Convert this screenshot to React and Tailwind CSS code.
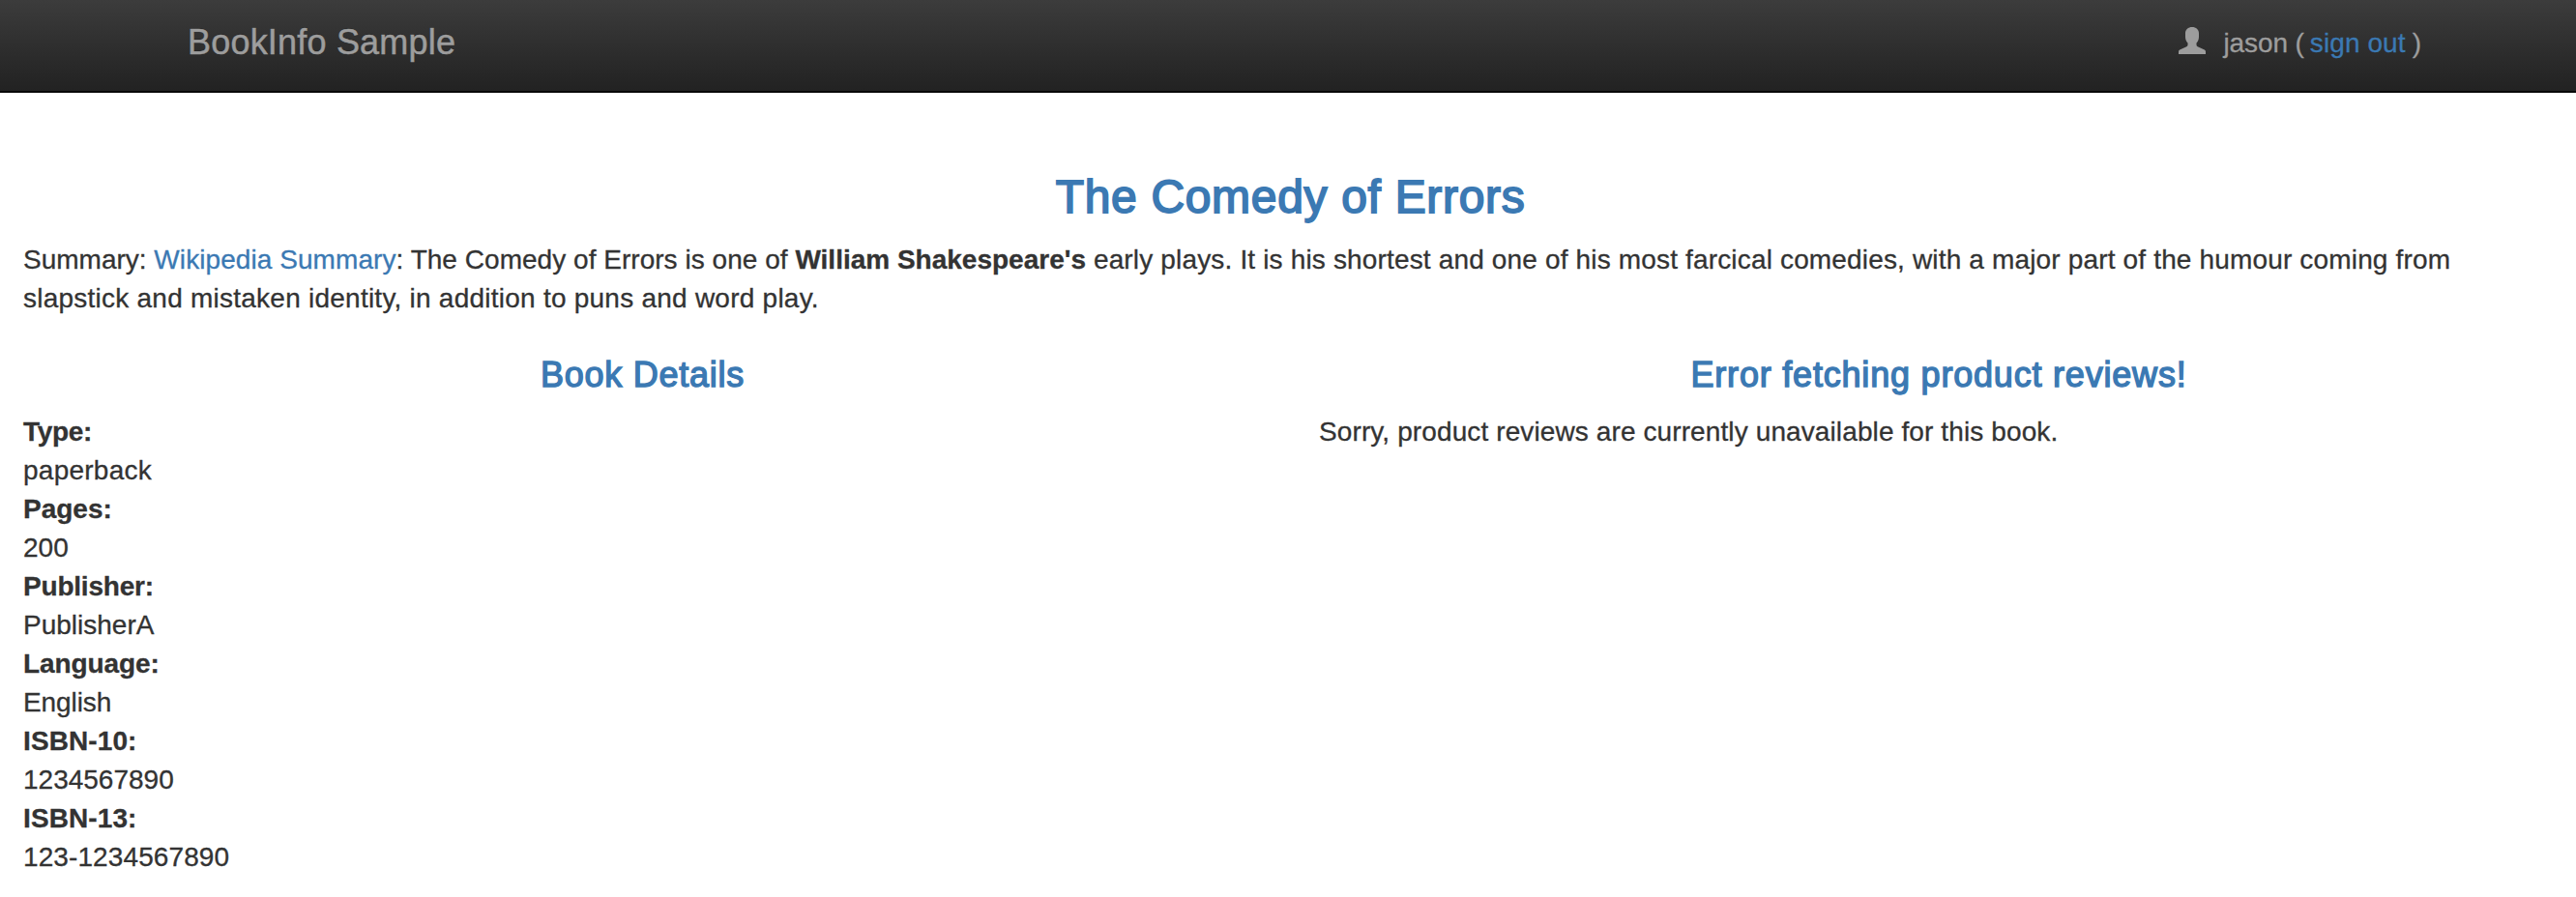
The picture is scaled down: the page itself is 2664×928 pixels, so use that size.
const details = [
  { label: "Type:", value: "paperback", labelClass: "tracking-[-0.3px]", valueClass: "tracking-[0.25px]" },
  { label: "Pages:", value: "200" },
  { label: "Publisher:", value: "PublisherA", labelClass: "tracking-[-0.2px]" },
  { label: "Language:", value: "English", labelClass: "tracking-[-0.1px]", valueClass: "tracking-[-0.1px]" },
  { label: "ISBN-10:", value: "1234567890", labelClass: "tracking-[0.1px]" },
  { label: "ISBN-13:", value: "123-1234567890", labelClass: "tracking-[0.1px]", valueClass: "tracking-[0.1px]" },
];

function UserIcon() {
  return (
    <svg viewBox="0 0 28 28" className="size-7 shrink-0" fill="currentColor" aria-hidden="true">
      <path d="M14 0C10 0 7 2.500 7 6.500V10C7 13 8 14.800 9.500 16.500V18.300C9.500 19.200 9.100 19.800 8.300 20.200L1.200 23.500C.4 23.900 0 24.500 0 25.400V28H28V25.400C28 24.500 27.600 23.900 26.800 23.500L19.700 20.200C18.900 19.800 18.500 19.200 18.500 18.300V16.500C20 14.800 21 13 21 10V6.500C21 2.500 18 0 14 0Z" />
    </svg>
  );
}

function Navbar() {
  return (
    <nav className="flex h-24 items-start justify-between border-b-2 border-[#080808] bg-linear-to-b from-[#3c3c3c] to-[#222222] pl-[194px] pr-40 text-[#9d9d9d]">
      <a className="mt-6 text-[36px] leading-10 tracking-[0.2px] [-webkit-text-stroke:0.5px_currentColor] [text-shadow:0_-1px_0_rgba(0,0,0,0.25)]">
        BookInfo Sample
      </a>
      <div className="mt-[25px] flex whitespace-pre leading-10">
        <span className="mt-[3px] mr-[18px]">
          <UserIcon />
        </span>
        <span className="tracking-[-0.1px]">jason (</span>
        <a className="ml-[6px] tracking-[0.1px] text-[#3b79b3]">sign out</a>
        <span className="ml-[7px]">)</span>
      </div>
    </nav>
  );
}

export default function App() {
  return (
    <div className="min-h-[928px] bg-white font-['Liberation_Sans',Arial,sans-serif] text-[28px] leading-10 text-[#333333] [-webkit-text-stroke:0.3px_currentColor]">
      <Navbar />
      <main className="pt-[81px] pr-[18px] pl-6">
        <h3 className="mb-[19px] pr-px text-center text-[48px] leading-[53px] tracking-[0.68px] text-[#3b79b3] [-webkit-text-stroke:1.8px_currentColor]">
          The Comedy of Errors
        </h3>
        <p>
          Summary: <a className="tracking-[0.07px] text-[#3b79b3]">Wikipedia Summary</a>
          <span className="tracking-[0.03px]">: The Comedy of Errors is one of </span>
          <b>William Shakespeare's</b>
          <span className="tracking-[0.16px]">
            {" "}early plays. It is his shortest and one of his most farcical comedies, with a major part of the humour coming from
          </span>
          <br />
          <span className="tracking-[0.24px]">
            slapstick and mistaken identity, in addition to puns and word play.
          </span>
        </p>
        <div className="mt-[39px] grid grid-cols-2 gap-x-[58px]">
          <section>
            <h4 className="mb-[19px] pr-px text-center text-[36px] leading-10 tracking-[0.76px] text-[#3b79b3] [-webkit-text-stroke:1.4px_currentColor]">
              Book Details
            </h4>
            <dl>
              {details.map((item) => (
                <div key={item.label}>
                  <dt className={`font-bold ${item.labelClass ?? ""}`}>{item.label}</dt>
                  <dd className={item.valueClass}>{item.value}</dd>
                </div>
              ))}
            </dl>
          </section>
          <section>
            <h4 className="mb-[19px] text-center text-[36px] leading-10 tracking-[0.8px] text-[#3b79b3] [-webkit-text-stroke:1.4px_currentColor]">
              Error fetching product reviews!
            </h4>
            <p className="tracking-[0.11px]">Sorry, product reviews are currently unavailable for this book.</p>
          </section>
        </div>
      </main>
    </div>
  );
}
